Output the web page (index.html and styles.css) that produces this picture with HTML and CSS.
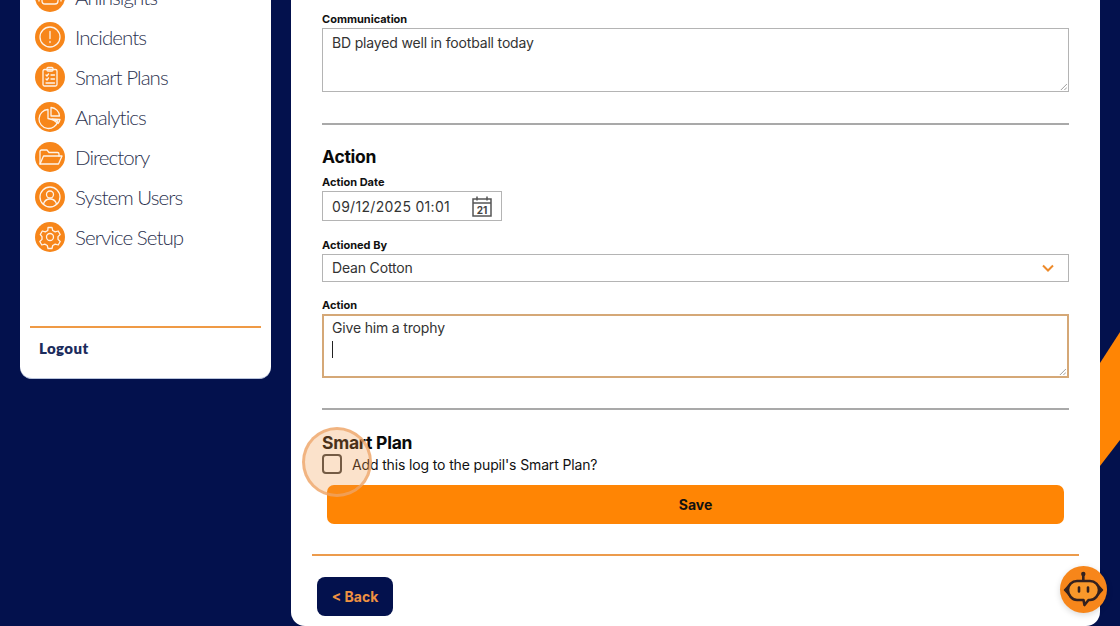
FILE: index.html
```html
<!DOCTYPE html>
<html lang="en">
<head>
<meta charset="utf-8">
<title>Log</title>
<link rel="stylesheet" href="styles.css">
</head>
<body>
<div class="deco"></div>
<div class="layout">
  <aside class="sidebar">
    <nav class="nav">
      <a class="nav-item"><span class="nav-icon"><svg viewBox="0 0 30 30"><rect x="7" y="8" width="16" height="14" rx="3"/><path d="M11 13h2M15 13h2M11 17h2M15 17h2M19 13h1M19 17h1M4 13v6M26 13v6"/></svg></span>AnInsights</a>
      <a class="nav-item"><span class="nav-icon"><svg viewBox="0 0 30 30"><circle cx="15" cy="15" r="10"/><path d="M15 9.500v7M15 19.500v1"/></svg></span>Incidents</a>
      <a class="nav-item"><span class="nav-icon"><svg viewBox="0 0 30 30"><rect x="8" y="7.500" width="14" height="16.500" rx="1.500"/><rect x="12" y="5.500" width="6" height="3.500" rx="1"/><path d="M11 13l1 1 1.500-2M16 13h3.500M11 17l1 1 1.500-2M16 17h3.500M11 21h8.500"/></svg></span>Smart Plans</a>
      <a class="nav-item"><span class="nav-icon"><svg viewBox="0 0 30 30"><path d="M13 7.500a9.500 9.500 0 1 0 9.800 11.500L13 16.500z"/><path d="M16 5.500a9 9 0 0 1 8.500 8.500L16 14z"/><path d="M17 17l8 .5a9 9 0 0 1-2 4z"/></svg></span>Analytics</a>
      <a class="nav-item"><span class="nav-icon"><svg viewBox="0 0 30 30"><path d="M5 22V9.500A1.500 1.500 0 0 1 6.500 8H12l2 2.500h8.500A1.500 1.500 0 0 1 24 12v2"/><path d="M5 22l3.500-8H27l-3.500 8z"/></svg></span>Directory</a>
      <a class="nav-item"><span class="nav-icon"><svg viewBox="0 0 30 30"><circle cx="15" cy="15" r="10"/><circle cx="15" cy="12.500" r="3.500"/><path d="M8.500 22c1-3.500 3.500-5 6.500-5s5.500 1.500 6.500 5"/></svg></span>System Users</a>
      <a class="nav-item"><span class="nav-icon"><svg viewBox="0 0 30 30"><circle cx="15" cy="15" r="3.500"/><path d="M13 5.500h4l.7 3 2.500 1.400 3-.9 2 3.500-2.200 2.100v2.800l2.200 2.100-2 3.500-3-.9-2.500 1.400-.7 3h-4l-.7-3-2.500-1.400-3 .9-2-3.500 2.200-2.100v-2.800L5.300 12.500l2-3.500 3 .9 2.500-1.400z"/></svg></span>Service Setup</a>
    </nav>
    <div class="side-foot"><a class="logout">Logout</a></div>
  </aside>
  <main class="panel">
    <section class="form">
      <div class="field">
        <label class="label">Communication</label>
        <div class="textarea">BD played well in football today<svg class="grip" viewBox="0 0 8 8"><path d="M1 8l7-7M5 8l3-3"/></svg></div>
      </div>
      <hr class="rule">
      <h2 class="heading">Action</h2>
      <div class="field date-field">
        <label class="label">Action Date</label>
        <div class="input date"><span>09/12/2025 01:01</span>
          <svg class="cal" viewBox="0 0 22 22"><path class="cal-line" d="M2 4h18v17H2zM2 8h18M6 1.500v4M16 1.500v4"/><text class="cal-num" x="11" y="19" text-anchor="middle">21</text></svg>
        </div>
      </div>
      <div class="field gap-field">
        <label class="label">Actioned By</label>
        <div class="input select"><span>Dean Cotton</span>
          <svg class="chev" viewBox="0 0 12 8"><path d="M1 1.500l5 5 5-5"/></svg>
        </div>
      </div>
      <div class="field gap-field-sm">
        <label class="label">Action</label>
        <div class="textarea focus">Give him a trophy<span class="caret"></span><svg class="grip" viewBox="0 0 8 8"><path d="M1 8l7-7M5 8l3-3"/></svg></div>
      </div>
      <hr class="rule rule-2">
      <h2 class="heading heading-2">Smart Plan</h2>
      <label class="check-row"><span class="check"></span>Add this log to the pupil's Smart Plan?</label>
      <button class="save">Save</button>
    </section>
    <hr class="orange-rule">
    <button class="back">&lt; Back</button>
  </main>
</div>
<div class="highlight"></div>
<button class="bot" aria-label="Assistant">
  <svg viewBox="0 0 47 47"><circle class="bot-fill" cx="23.300" cy="8" r="2.200"/><path class="bot-line" d="M23.300 9v6"/><path class="bot-ear" d="M10 18L4.500 24 10 30zM37 18l5.500 6-5.500 6z"/><path class="bot-head" d="M17 15h13c5 0 9 4 9 9s-4 10-9 10h-1.500l-4 5-1-5H17c-5 0-9-5-9-10s4-9 9-9z"/><path class="bot-eye" d="M19 21.500v4M28 21.500v4"/></svg>
</button>
</body>
</html>
```
FILE: styles.css
```css
* { box-sizing: border-box; }
html, body { margin: 0; height: 626px; overflow: hidden; }
body { background: #03114d; font-family: "Inter", sans-serif; color: #111; position: relative; }

.deco { position: absolute; right: 0; top: 332px; width: 20px; height: 134px; background: #ff8504; clip-path: polygon(100% 0, 100% 108px, 0 134px, 0 31px); }

.layout { display: flex; align-items: flex-start; gap: 20px; padding: 0 20px; height: 626px; position: relative; }

.sidebar { width: 251px; flex: none; height: 379px; background: #fff; border-radius: 0 0 12px 12px; border-bottom: 1px solid #b9c4dc; display: flex; flex-direction: column; overflow: hidden; }
.nav { margin-top: -23px; padding: 0 15px; display: flex; flex-direction: column; height: 349px; }
.nav-item { display: flex; align-items: center; gap: 10px; height: 40px; flex: none; font-family: "Lato", sans-serif; font-weight: 300; font-size: 20.500px; letter-spacing: -.95px; color: #2d3350; }
.nav-icon { width: 30px; height: 30px; border-radius: 50%; background: #f7861a; flex: none; display: flex; }
.nav-icon svg { width: 30px; height: 30px; fill: none; stroke: #fff; stroke-width: 1.300; stroke-linecap: round; stroke-linejoin: round; opacity: .9; }
.side-foot { margin: 0 10px; border-top: 2px solid #ef9a45; padding: 10px 9px 0; }
.logout { font-family: "Lato", sans-serif; font-weight: 800; font-size: 15px; color: #1b2c5c; letter-spacing: .4px; }

.panel { flex: none; width: 809px; height: 626px; background: #fff; border-radius: 0 0 14px 14px; padding: 0 21px; overflow: hidden; }
.form { padding: 12px 10px 0; }
.field { display: flex; flex-direction: column; }
.label { font-size: 11px; font-weight: 700; line-height: 14px; height: 16px; color: #111; }
.textarea, .input { border: 1px solid #b4b4b4; font-size: 14px; letter-spacing: -.17px; color: #333; padding: 5px 9px; background: #fff; position: relative; }
.textarea { height: 64px; line-height: 18px; }
.grip { position: absolute; right: 1px; bottom: 1px; width: 7px; height: 7px; stroke: #777; stroke-width: .8; fill: none; }
.rule { border: 0; height: 2px; background: #a9a9a9; margin: 31px 0 0; }
.heading { font-size: 17.500px; font-weight: 700; line-height: 24px; margin: 20px 0 0; color: #0a0a0a; letter-spacing: -.25px; }
.date-field { margin-top: 6px; }
.input { display: flex; align-items: center; justify-content: space-between; }
.input span { position: relative; top: -1px; }
.date { width: 180px; height: 30px; padding-right: 8px; letter-spacing: .3px; }
.date span { top: 0; }
.cal { width: 22px; height: 22px; }
.cal-line { fill: none; stroke: #555; stroke-width: 1.500; }
.cal-num { font-size: 10px; font-weight: 700; fill: #444; letter-spacing: 0; }
.select { height: 28px; padding-right: 14px; }
.chev { width: 12px; height: 8px; fill: none; stroke: #ed8a2a; stroke-width: 2; }
.gap-field { margin-top: 17px; }
.gap-field-sm { margin-top: 16px; }
.focus { border: 2px solid #d5a877; padding: 3px 8px; }
.caret { display: block; width: 1px; height: 17px; background: #222; margin-top: 4px; }
.rule-2 { margin-top: 30px; }
.heading-2 { margin-top: 21px; }
.check-row { display: flex; align-items: center; gap: 10px; font-size: 14px; letter-spacing: -.14px; color: #111; height: 20px; margin-top: -1px; }
.check { width: 20px; height: 20px; border: 2px solid #444; border-radius: 4px; background: #fff; }
.save { display: block; width: 737px; height: 39px; margin: 11px 0 0 5px; border: 0; border-radius: 7px; background: #ff8504; font: 700 14px "Inter", sans-serif; color: #111; }
.orange-rule { border: 0; height: 2px; background: #ec9b4c; margin: 30px 0 0; }
.back { display: block; margin: 21px 0 0 5px; width: 76px; height: 39px; border: 0; border-radius: 8px; background: #03114d; color: #ef9141; font: 700 14px "Inter", sans-serif; }

.highlight { position: absolute; left: 302px; top: 427px; width: 70px; height: 70px; border-radius: 50%; background: rgba(240, 150, 70, .28); border: 3px solid rgba(238, 165, 105, .75); }
.bot { position: absolute; left: 1060px; top: 566px; width: 47px; height: 47px; padding: 0; border: 0; border-radius: 50%; background: #f7861a; box-shadow: 0 2px 6px rgba(0,0,0,.15); }
.bot svg { display: block; width: 47px; height: 47px; }
.bot-fill, .bot-ear { fill: #33211f; }
.bot-ear { stroke: #33211f; stroke-width: 1.500; stroke-linejoin: round; }
.bot-line, .bot-eye { stroke: #33211f; stroke-width: 2.600; stroke-linecap: round; fill: none; }
.bot-head { fill: #f9982a; stroke: #33211f; stroke-width: 2.600; stroke-linejoin: round; }
```
